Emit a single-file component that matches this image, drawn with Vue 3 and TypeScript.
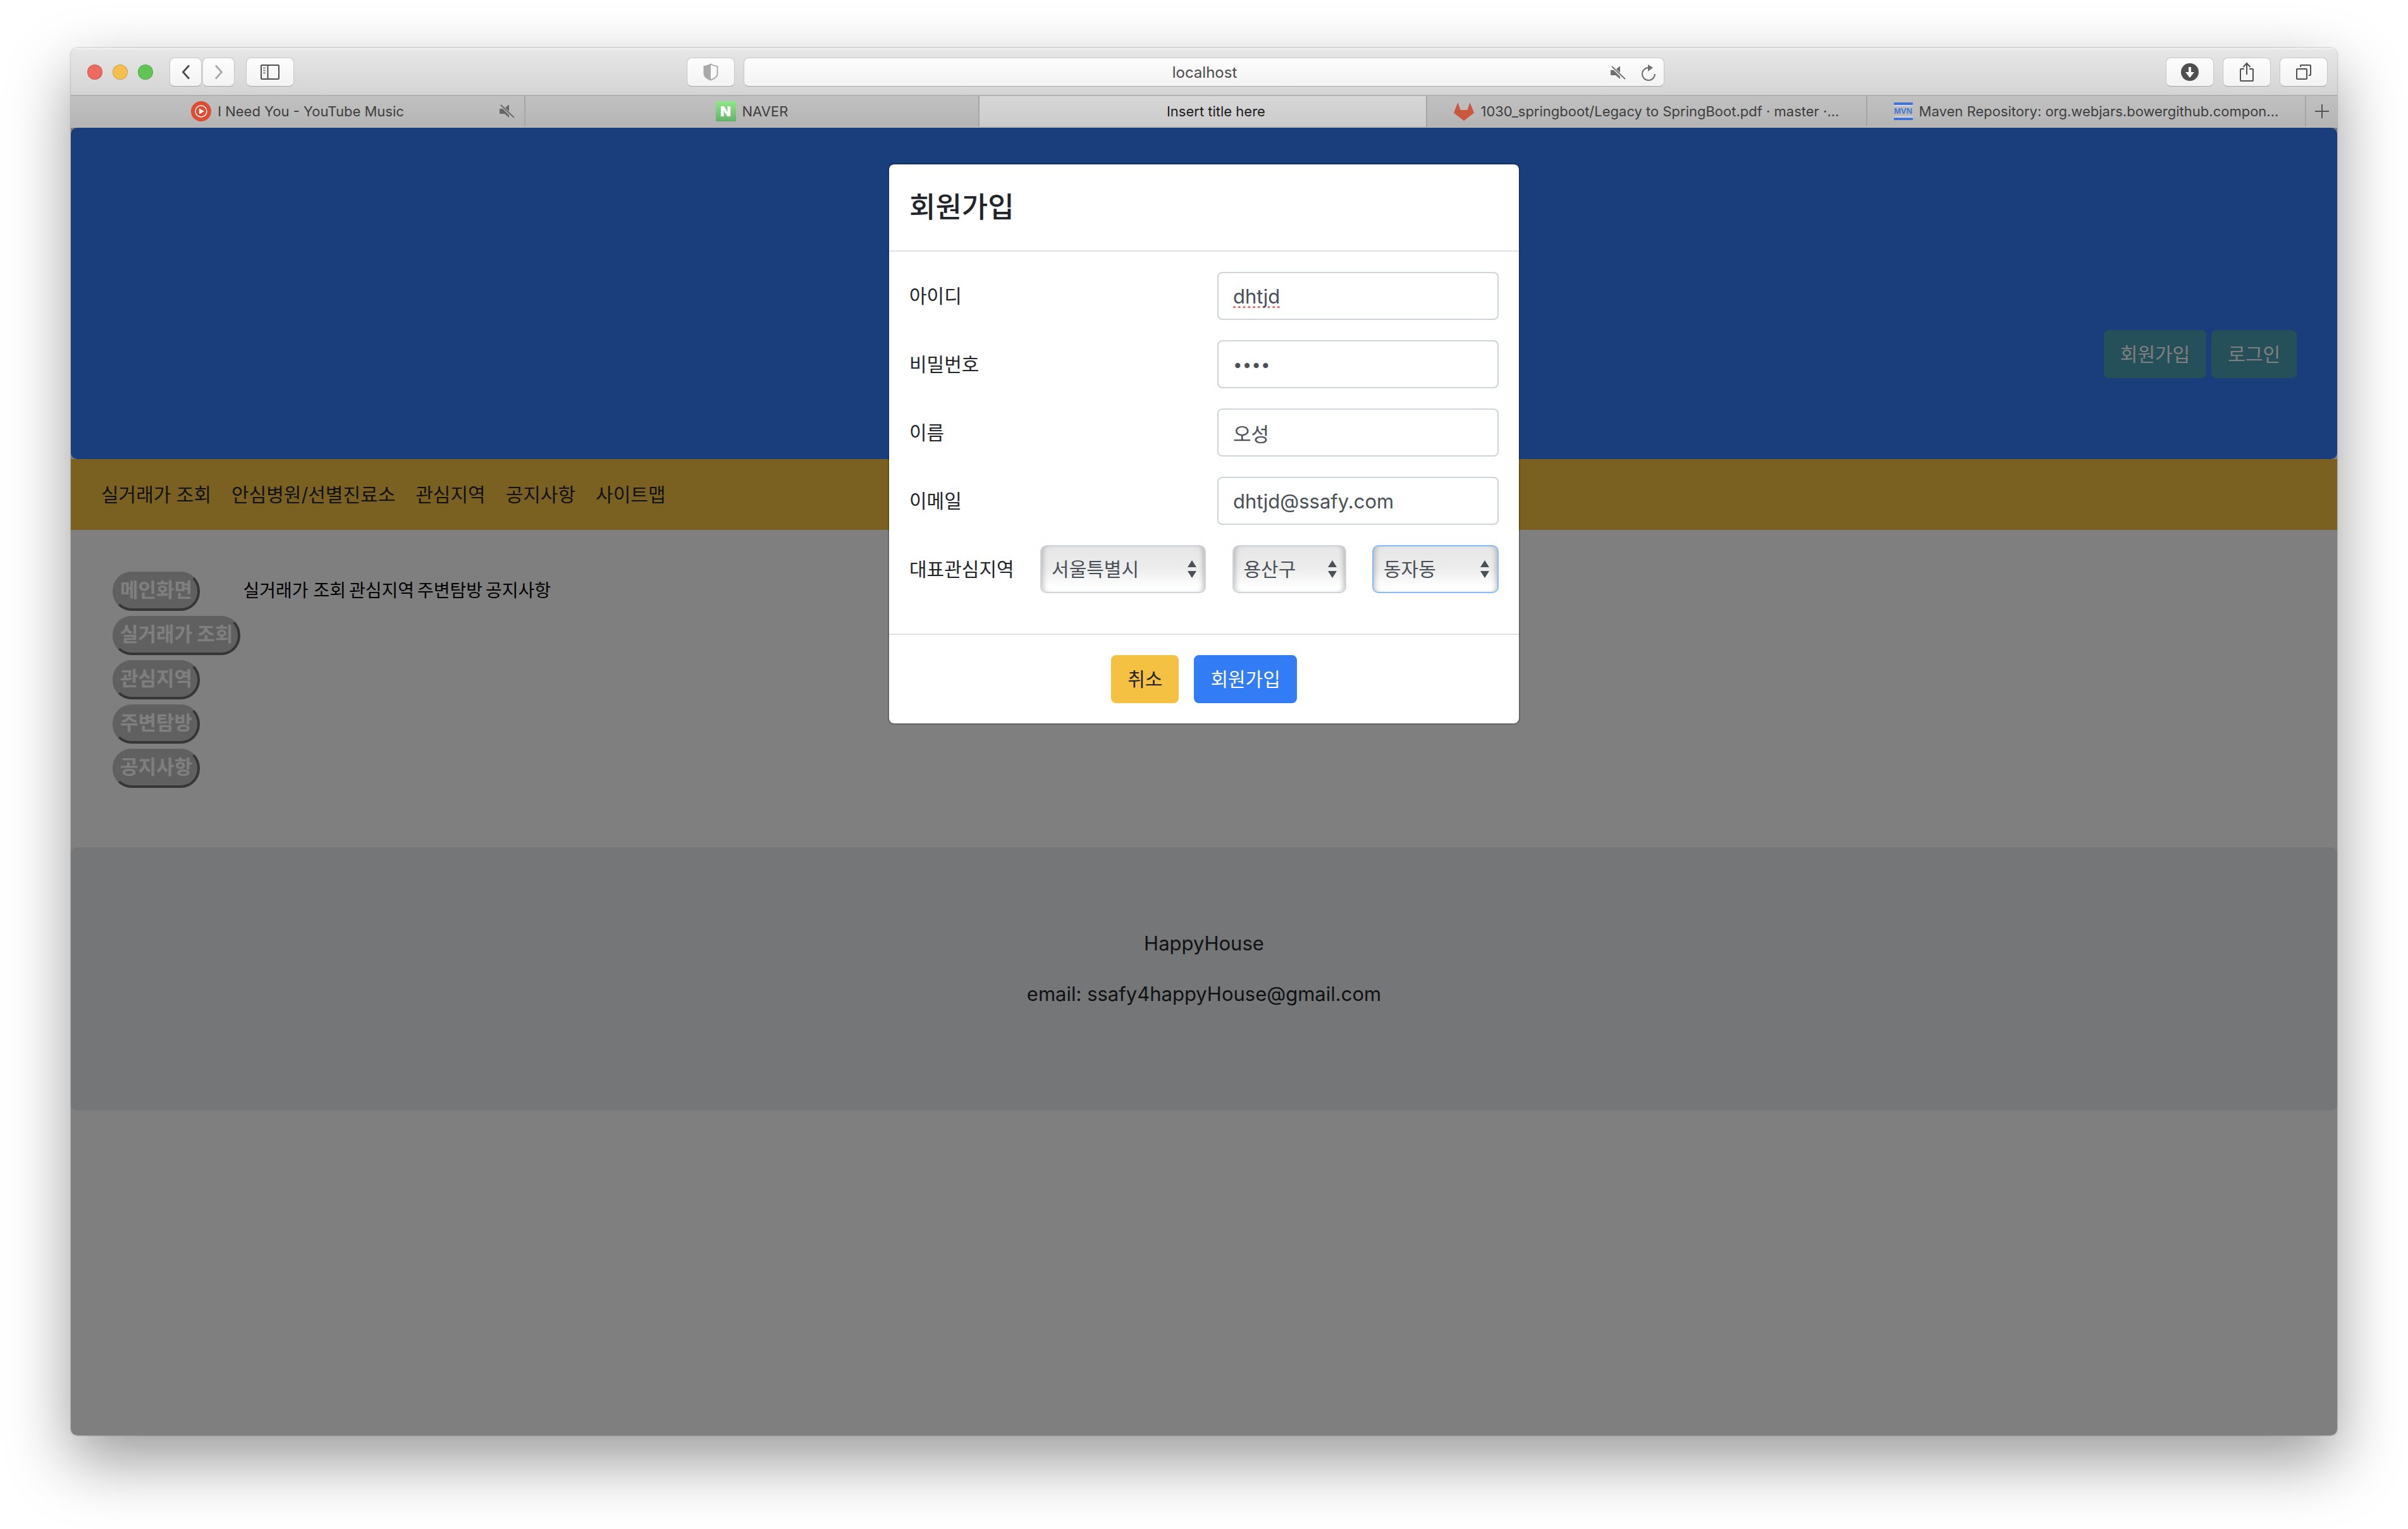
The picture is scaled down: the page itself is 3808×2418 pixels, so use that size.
<script setup lang="ts">
import { ref } from 'vue'

interface Tab {
  title: string
  icon: 'music' | 'naver' | 'none' | 'gitlab' | 'maven'
  grow: number
  active?: boolean
  muted?: boolean
}

interface Region {
  id: string
  label: string
  options: string[]
}

const tabs: Tab[] = [
  { title: 'I Need You - YouTube Music', icon: 'music', grow: 719, muted: true },
  { title: 'NAVER', icon: 'naver', grow: 718 },
  { title: 'Insert title here', icon: 'none', grow: 708, active: true },
  { title: '1030_springboot/Legacy to SpringBoot.pdf · master ·...', icon: 'gitlab', grow: 696 },
  { title: 'Maven Repository: org.webjars.bowergithub.compon...', icon: 'maven', grow: 694 },
]

const navLinks = ['실거래가 조회', '안심병원/선별진료소', '관심지역', '공지사항', '사이트맵']
const sideButtons = ['메인화면', '실거래가 조회', '관심지역', '주변탐방', '공지사항']
const sections = ['실거래가 조회', '관심지역', '주변탐방', '공지사항']

const userId = ref('dhtjd')
const password = ref('1234')
const userName = ref('오성')
const email = ref('dhtjd@ssafy.com')

const regions: Region[] = [
  { id: 'sido', label: '시도', options: ['서울특별시'] },
  { id: 'gugun', label: '구군', options: ['용산구'] },
  { id: 'dong', label: '동', options: ['동자동'] },
]
</script>

<template>
  <div class="desktop">
    <div class="window">
      <div class="toolbar">
        <div class="lights">
          <span class="light red"></span>
          <span class="light yellow"></span>
          <span class="light green"></span>
        </div>
        <div class="history">
          <button type="button" class="tool half" aria-label="Back">
            <svg width="14" height="24" viewBox="0 0 14 24"><path d="M12 1.500L2.500 12l9.500 10.500" fill="none" stroke="#4a4a4a" stroke-width="2.800" /></svg>
          </button>
          <button type="button" class="tool half" aria-label="Forward">
            <svg width="14" height="24" viewBox="0 0 14 24"><path d="M2 1.500L11.500 12 2 22.500" fill="none" stroke="#a8a8a8" stroke-width="2.800" /></svg>
          </button>
        </div>
        <button type="button" class="tool" aria-label="Sidebar">
          <svg width="30" height="24" viewBox="0 0 30 24" fill="none" stroke="#4f4f4f" stroke-width="2">
            <rect x="1" y="1" width="28" height="22" rx="1" />
            <path d="M11.500 1v22" />
            <path d="M4 5.500h4M4 9.500h4M4 13.500h4" stroke="#8a8a8a" />
          </svg>
        </button>
        <div class="address">
          <button type="button" class="tool" aria-label="Privacy report">
            <svg width="24" height="28" viewBox="0 0 24 28">
              <path d="M12 1.500C9 3.500 5 4.500 1.500 5v12c0 4 4 7 10.500 9.500C18.500 24 22.500 21 22.500 17V5C19 4.500 15 3.500 12 1.500z" fill="#fafafa" stroke="#a9a9a9" stroke-width="2" />
              <path d="M12 1.500C9 3.500 5 4.500 1.500 5v12c0 4 4 7 10.500 9.500z" fill="#a9a9a9" />
            </svg>
          </button>
          <div class="field">
            <span class="url">localhost</span>
            <span class="field-icons">
              <svg width="24" height="22" viewBox="0 0 24 22" fill="#6f6f6f">
                <path d="M0 7h5l10 10v4L8 15H0zM9 5l6-4.500V11z" />
                <path d="M2 1l21 20" stroke="#6f6f6f" stroke-width="1.800" />
              </svg>
              <svg width="24" height="26" viewBox="0 0 24 26">
                <path d="M12 5A10 10 0 1 0 22 15" fill="none" stroke="#6f6f6f" stroke-width="2" />
                <path d="M11 0l8 5-8 6z" fill="#6f6f6f" />
              </svg>
            </span>
          </div>
        </div>
        <div class="actions">
          <button type="button" class="tool" aria-label="Downloads">
            <svg width="28" height="28" viewBox="0 0 28 28">
              <circle cx="14" cy="14" r="14" fill="#505050" />
              <path d="M12 6h4v8h5l-7 9-7-9h5z" fill="#fafafa" />
            </svg>
          </button>
          <button type="button" class="tool" aria-label="Share">
            <svg width="22" height="32" viewBox="0 0 22 32" fill="none" stroke="#505050" stroke-width="2">
              <path d="M7 11H2a1 1 0 0 0-1 1v17a1 1 0 0 0 1 1h18a1 1 0 0 0 1-1V12a1 1 0 0 0-1-1h-5M11 20V2M5.500 8L11 2l5.500 6" />
            </svg>
          </button>
          <button type="button" class="tool" aria-label="Tab overview">
            <svg width="24" height="24" viewBox="0 0 24 24" fill="none" stroke="#505050" stroke-width="2">
              <rect x="1" y="7" width="16" height="16" rx="1" />
              <path d="M7 4V2a1 1 0 0 1 1-1h14a1 1 0 0 1 1 1v14a1 1 0 0 1-1 1h-2" />
            </svg>
          </button>
        </div>
      </div>

      <div class="tabbar">
        <div
          v-for="tab in tabs"
          :key="tab.title"
          class="tab"
          :class="{ active: tab.active }"
          :style="{ flexGrow: tab.grow }"
        >
          <span class="favicon" :class="tab.icon">
            <svg v-if="tab.icon === 'music'" width="32" height="32" viewBox="0 0 32 32">
              <circle cx="16" cy="16" r="16" fill="#dc4d34" />
              <circle cx="16" cy="16" r="9" fill="none" stroke="#fff" stroke-width="1.400" />
              <path d="M13 11.500l8 4.500-8 4.500z" fill="#fff" />
            </svg>
            <template v-else-if="tab.icon === 'naver'">N</template>
            <svg v-else-if="tab.icon === 'gitlab'" width="32" height="32" viewBox="0 0 32 32">
              <path d="M6.500 2l4 12h11l4-12L32 18.500 16 31 0 18.500z" fill="#c9583c" />
            </svg>
            <template v-else-if="tab.icon === 'maven'">MVN</template>
          </span>
          <span class="tab-title">{{ tab.title }}</span>
          <svg v-if="tab.muted" class="tab-mute" width="24" height="22" viewBox="0 0 24 22" fill="#666">
            <path d="M0 7h5l10 10v4L8 15H0zM9 5l6-4.500V11z" />
            <path d="M2 1l21 20" stroke="#666" stroke-width="1.800" />
          </svg>
        </div>
        <button type="button" class="new-tab" aria-label="New tab">
          <svg width="22" height="22" viewBox="0 0 22 22"><path d="M11 0v22M0 11h22" stroke="#555" stroke-width="2" /></svg>
        </button>
      </div>

      <div class="page">
        <header class="hero">
          <button type="button" class="btn info">회원가입</button>
          <button type="button" class="btn info">로그인</button>
        </header>
        <nav class="menu">
          <a v-for="link in navLinks" :key="link" href="#">{{ link }}</a>
        </nav>
        <main class="content">
          <div class="side">
            <button v-for="item in sideButtons" :key="item" type="button" class="side-btn">{{ item }}</button>
          </div>
          <div class="summary">
            <span v-for="section in sections" :key="section">{{ section }}</span>
          </div>
        </main>
        <footer class="footer">
          <p>HappyHouse</p>
          <p>email: ssafy4happyHouse@gmail.com</p>
        </footer>

        <div class="backdrop">
          <form class="modal" @submit.prevent>
            <div class="modal-header">
              <h4>회원가입</h4>
            </div>
            <div class="modal-body">
              <div class="row">
                <label for="user-id">아이디</label>
                <input id="user-id" v-model="userId" class="control misspelled" type="text" spellcheck="false" />
              </div>
              <div class="row">
                <label for="user-pw">비밀번호</label>
                <input id="user-pw" v-model="password" class="control secret" type="password" />
              </div>
              <div class="row">
                <label for="user-name">이름</label>
                <input id="user-name" v-model="userName" class="control" type="text" spellcheck="false" />
              </div>
              <div class="row">
                <label for="user-email">이메일</label>
                <input id="user-email" v-model="email" class="control" type="text" spellcheck="false" />
              </div>
              <div class="row">
                <label for="sido">대표관심지역</label>
                <div v-for="region in regions" :key="region.id" class="picker" :class="region.id">
                  <select :id="region.id" :aria-label="region.label">
                    <option v-for="option in region.options" :key="option">{{ option }}</option>
                  </select>
                  <svg class="arrows" width="14" height="28" viewBox="0 0 14 28" fill="#495057">
                    <path d="M7 0l7 11H0zM7 28L0 17h14z" />
                  </svg>
                </div>
              </div>
            </div>
            <div class="modal-footer">
              <button type="button" class="btn warning">취소</button>
              <button type="submit" class="btn primary">회원가입</button>
            </div>
          </form>
        </div>
      </div>
    </div>
  </div>
</template>

<style>
body {
  margin: 0;
  background: #fff;
}
</style>

<style scoped>
.desktop,
.desktop * {
  box-sizing: border-box;
}

.desktop {
  display: flex;
  min-height: 100vh;
  padding: 76px 112px 148px;
  font-family: Inter, "Noto Sans CJK KR", sans-serif;
  font-size: 30px;
  line-height: 48px;
  color: #212529;
}

button,
input,
select {
  margin: 0;
  font-family: inherit;
  font-size: inherit;
  line-height: inherit;
}

svg {
  display: block;
  flex: none;
}

.window {
  display: flex;
  flex: 1;
  flex-direction: column;
  min-width: 0;
  overflow: hidden;
  border-radius: 10px;
  box-shadow: 0 0 2px rgba(0, 0, 0, 0.5), 0 40px 100px rgba(0, 0, 0, 0.4);
}

/* Browser toolbar */
.toolbar {
  display: flex;
  align-items: center;
  height: 76px;
  padding: 2px 15px 0 26px;
  background: linear-gradient(#e7e7e7, #d4d4d4);
  border-bottom: 2px solid #b0b0b0;
  box-shadow: inset 0 2px #f4f4f4;
}

.lights {
  display: flex;
  gap: 16px;
}

.light {
  width: 24px;
  height: 24px;
  border: 1px solid rgba(0, 0, 0, 0.15);
  border-radius: 50%;
}

.red {
  background: #ed6a5e;
}

.yellow {
  background: #f5bf4f;
}

.green {
  background: #61c554;
}

.history {
  display: flex;
  gap: 1px;
  margin: 0 18px 0 26px;
}

.tool {
  display: flex;
  align-items: center;
  justify-content: center;
  width: 76px;
  height: 46px;
  padding: 0;
  background: linear-gradient(#fdfdfd, #f3f3f3);
  border: 1px solid #c6c6c6;
  border-bottom-color: #a6a6a6;
  border-radius: 8px;
}

.half {
  width: 51px;
}

.address {
  display: flex;
  flex: 1;
  gap: 14px;
  margin: 0 793px 0 621px;
}

.field {
  display: flex;
  flex: 1;
  align-items: center;
  height: 46px;
  padding: 2px 12px 0 86px;
  background: linear-gradient(#fdfdfd, #f3f3f3);
  border: 1px solid #c6c6c6;
  border-bottom-color: #a6a6a6;
  border-radius: 8px;
}

.url {
  flex: 1;
  font-size: 24px;
  text-align: center;
  color: #4a4a4a;
}

.field-icons {
  display: flex;
  gap: 24px;
  align-items: center;
}

.actions {
  display: flex;
  gap: 14px;
}

/* Tab strip */
.tabbar {
  display: flex;
  height: 50px;
  background: linear-gradient(#c1c1c1, #b5b5b5);
  border-bottom: 2px solid #b8b8b8;
}

.tab {
  position: relative;
  display: flex;
  flex-basis: 0;
  gap: 10px;
  align-items: center;
  justify-content: center;
  min-width: 0;
  font-size: 22px;
  color: #3e3e3e;
  white-space: nowrap;
  border-right: 2px solid #a6a6a6;
}

.tab.active {
  color: #1c1c1c;
  background: linear-gradient(#d7d7d7, #cbcbcb);
}

.tab-mute {
  position: absolute;
  right: 15px;
}

.favicon {
  flex: none;
  width: 32px;
  height: 32px;
}

.naver {
  font-size: 22px;
  font-weight: 900;
  line-height: 32px;
  text-align: center;
  color: #fff;
  background: linear-gradient(#8ee887, #66b06c);
}

.favicon.maven {
  width: 30px;
  height: 28px;
  font-family: "Liberation Sans", sans-serif;
  font-size: 13px;
  font-weight: 700;
  line-height: 20px;
  text-align: center;
  color: #4174d6;
  border: solid #4174d6;
  border-width: 4px 0;
  box-shadow: inset 0 2px #d3d8e2, inset 0 -2px #d3d8e2;
}

.new-tab {
  display: flex;
  align-items: center;
  justify-content: center;
  width: 49px;
  padding: 0;
  background: none;
  border: 0;
}

/* Web page */
.page {
  position: relative;
  flex: 1;
  background: #fff;
}

.btn {
  height: 76px;
  padding: 0 24px;
  border: 2px solid transparent;
  border-radius: 8px;
  color: #fff;
}

.info {
  background: #4b9fb3;
  border-color: #4b9fb3;
}

.warning {
  color: #212529;
  background: #f5c142;
  border-color: #f5c142;
}

.primary {
  background: #327cf6;
  border-color: #327cf6;
}

.hero {
  display: flex;
  gap: 8px;
  align-items: flex-end;
  justify-content: flex-end;
  height: 524px;
  padding: 128px 64px;
  background: #327cf6;
  border-radius: 10px;
}

.menu {
  display: flex;
  gap: 32px;
  padding: 32px 48px;
  background: #f7c243;
}

.menu a {
  color: #212529;
  text-decoration: none;
}

.content {
  display: flex;
  gap: 4px;
  padding: 66px 66px 94px;
}

.side {
  display: flex;
  flex-direction: column;
  gap: 8px;
  align-items: flex-start;
}

.side-btn {
  height: 62px;
  padding: 0 8px 4px;
  font-size: 31px;
  font-weight: 700;
  line-height: 46px;
  color: #fff;
  background: #c1c1c1;
  border: 4px solid;
  border-color: #c1c1c1 #6c6c6c #6c6c6c #c1c1c1;
  border-radius: 30px;
}

.summary {
  display: flex;
  gap: 5px;
  padding: 6px 0;
  font-size: 28px;
  color: #000;
}

.footer {
  padding: 128px 64px;
  font-size: 31px;
  text-align: center;
  background: #e9ecef;
  border-radius: 10px;
}

.footer p {
  margin: 0 0 32px;
}

/* Sign-up dialog */
.backdrop {
  position: absolute;
  inset: 0;
  padding: 56px;
  background: rgba(0, 0, 0, 0.5);
}

.modal {
  max-width: 1000px;
  margin: 0 auto;
  background: #fff;
  background-clip: padding-box;
  border: 2px solid rgba(0, 0, 0, 0.2);
  border-radius: 10px;
}

.modal-header {
  padding: 32px;
  border-bottom: 2px solid #dee2e6;
}

.modal-header h4 {
  margin: 0;
  font-size: 45px;
  font-weight: 500;
  line-height: 72px;
}

.modal-body {
  padding: 32px;
}

.row {
  display: flex;
  align-items: center;
  justify-content: space-between;
  margin-bottom: 32px;
}

.control {
  width: 445px;
  height: 76px;
  padding: 0 23px;
  font-size: 31px;
  color: #495057;
  background: #fff;
  border: 2px solid #ced4da;
  border-radius: 8px;
}

.misspelled {
  text-decoration: underline dotted #f2665a 4px;
  text-decoration-skip-ink: none;
  text-underline-offset: 5px;
}

.secret {
  font-size: 26px;
}

.picker {
  position: relative;
}

.picker select {
  width: 100%;
  height: 76px;
  padding: 0 16px;
  appearance: none;
  color: #495057;
  background: linear-gradient(#e6e6e6, #ededed 50%, #fff 90%);
  border: 2px solid #ced4da;
  border-radius: 10px;
  box-shadow: inset 8px 0 8px -6px rgba(0, 0, 0, 0.25), inset -8px 0 8px -6px rgba(0, 0, 0, 0.25);
}

.sido {
  width: 262px;
}

.gugun {
  width: 180px;
}

.dong {
  width: 200px;
}

.dong select {
  border-color: #8bbafa;
}

.arrows {
  position: absolute;
  top: 24px;
  right: 15px;
  pointer-events: none;
}

.modal-footer {
  display: flex;
  gap: 24px;
  justify-content: center;
  padding: 32px;
  border-top: 2px solid #dee2e6;
}
</style>
